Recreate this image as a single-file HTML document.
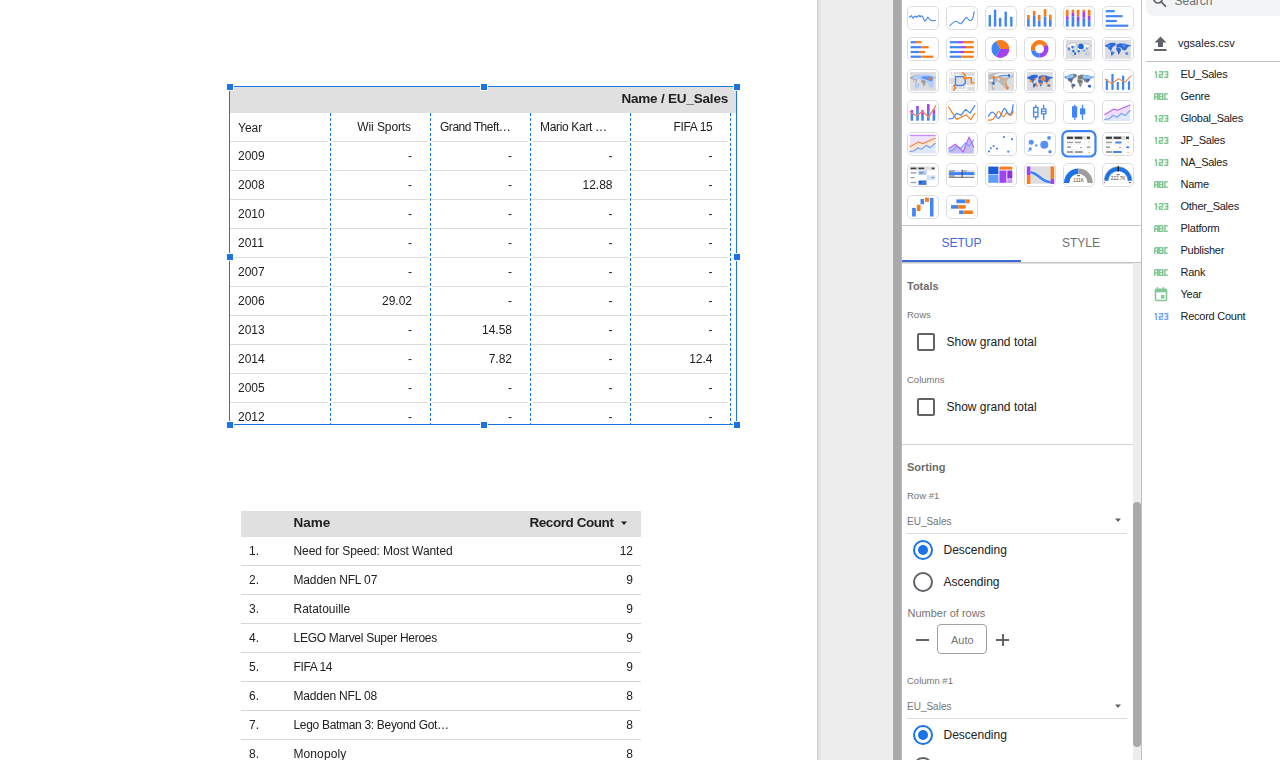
<!DOCTYPE html><html><head><meta charset="utf-8"><style>
*{box-sizing:border-box;margin:0;padding:0}
html,body{width:1280px;height:760px;overflow:hidden;background:#fff;font-family:"Liberation Sans",sans-serif;color:#212121}
.a{position:absolute}
.t{position:absolute;white-space:nowrap;font-size:12px;line-height:14px}
.r{text-align:right}
.b{font-weight:bold}
.hl{position:absolute;height:1px}
.dv{position:absolute;width:1px;background:repeating-linear-gradient(to bottom,#1a73e8 0 3px,transparent 3px 5px)}
.hd{position:absolute;width:8px;height:8px;background:#1a73e8;border:1px solid #fff}
.ib{position:absolute;width:33px;height:25px;border:1px solid #dadce0;border-radius:5px;background:#fff;overflow:hidden}
.ib svg{position:absolute;left:0;top:0}
</style></head><body>
<div class="a" style="left:817px;top:0;width:76px;height:760px;background:#ededed"></div>
<div class="a" style="left:817px;top:0;width:5px;height:760px;background:linear-gradient(to right,#cfcfcf,#e2e2e2 45%,#ededed)"></div>
<div class="a" style="left:893px;top:0;width:9px;height:760px;background:#aaaaaa"></div>
<div class="a" style="left:901px;top:0;width:1px;height:760px;background:#b6b7ba"></div>
<div class="a" style="left:0;top:0;width:817px;height:760px;will-change:transform">
<div class="a" style="left:230px;top:87px;width:506px;height:26px;background:#e0e0e0"></div>
<div class="t b" style="left:540px;top:92.30px;width:188px;text-align:right;font-size:13.5px;letter-spacing:-0.2px">Name / EU_Sales</div>
<div class="t" style="left:238px;top:121px">Year</div>
<div class="t r" style="left:331px;top:120px;width:80px;letter-spacing:-0.1px">Wii Sports</div>
<div class="t" style="left:440px;top:120px;letter-spacing:-0.46px">Grand Theft…</div>
<div class="t" style="left:540px;top:120px;letter-spacing:-0.33px">Mario Kart …</div>
<div class="t r" style="left:631px;top:120px;width:81.3px;letter-spacing:-0.36px">FIFA 15</div>
<div class="hl" style="left:230px;top:141px;width:98px;background:#dcdcdc"></div>
<div class="hl" style="left:332px;top:141px;width:96px;background:#dcdcdc"></div>
<div class="hl" style="left:432px;top:141px;width:96px;background:#dcdcdc"></div>
<div class="hl" style="left:532px;top:141px;width:96px;background:#dcdcdc"></div>
<div class="hl" style="left:632px;top:141px;width:96px;background:#dcdcdc"></div>
<div class="hl" style="left:230px;top:170px;width:98px;background:#dcdcdc"></div>
<div class="hl" style="left:332px;top:170px;width:96px;background:#dcdcdc"></div>
<div class="hl" style="left:432px;top:170px;width:96px;background:#dcdcdc"></div>
<div class="hl" style="left:532px;top:170px;width:96px;background:#dcdcdc"></div>
<div class="hl" style="left:632px;top:170px;width:96px;background:#dcdcdc"></div>
<div class="hl" style="left:230px;top:199px;width:98px;background:#dcdcdc"></div>
<div class="hl" style="left:332px;top:199px;width:96px;background:#dcdcdc"></div>
<div class="hl" style="left:432px;top:199px;width:96px;background:#dcdcdc"></div>
<div class="hl" style="left:532px;top:199px;width:96px;background:#dcdcdc"></div>
<div class="hl" style="left:632px;top:199px;width:96px;background:#dcdcdc"></div>
<div class="hl" style="left:230px;top:228px;width:98px;background:#dcdcdc"></div>
<div class="hl" style="left:332px;top:228px;width:96px;background:#dcdcdc"></div>
<div class="hl" style="left:432px;top:228px;width:96px;background:#dcdcdc"></div>
<div class="hl" style="left:532px;top:228px;width:96px;background:#dcdcdc"></div>
<div class="hl" style="left:632px;top:228px;width:96px;background:#dcdcdc"></div>
<div class="hl" style="left:230px;top:257px;width:98px;background:#dcdcdc"></div>
<div class="hl" style="left:332px;top:257px;width:96px;background:#dcdcdc"></div>
<div class="hl" style="left:432px;top:257px;width:96px;background:#dcdcdc"></div>
<div class="hl" style="left:532px;top:257px;width:96px;background:#dcdcdc"></div>
<div class="hl" style="left:632px;top:257px;width:96px;background:#dcdcdc"></div>
<div class="hl" style="left:230px;top:286px;width:98px;background:#dcdcdc"></div>
<div class="hl" style="left:332px;top:286px;width:96px;background:#dcdcdc"></div>
<div class="hl" style="left:432px;top:286px;width:96px;background:#dcdcdc"></div>
<div class="hl" style="left:532px;top:286px;width:96px;background:#dcdcdc"></div>
<div class="hl" style="left:632px;top:286px;width:96px;background:#dcdcdc"></div>
<div class="hl" style="left:230px;top:315px;width:98px;background:#dcdcdc"></div>
<div class="hl" style="left:332px;top:315px;width:96px;background:#dcdcdc"></div>
<div class="hl" style="left:432px;top:315px;width:96px;background:#dcdcdc"></div>
<div class="hl" style="left:532px;top:315px;width:96px;background:#dcdcdc"></div>
<div class="hl" style="left:632px;top:315px;width:96px;background:#dcdcdc"></div>
<div class="hl" style="left:230px;top:344px;width:98px;background:#dcdcdc"></div>
<div class="hl" style="left:332px;top:344px;width:96px;background:#dcdcdc"></div>
<div class="hl" style="left:432px;top:344px;width:96px;background:#dcdcdc"></div>
<div class="hl" style="left:532px;top:344px;width:96px;background:#dcdcdc"></div>
<div class="hl" style="left:632px;top:344px;width:96px;background:#dcdcdc"></div>
<div class="hl" style="left:230px;top:373px;width:98px;background:#dcdcdc"></div>
<div class="hl" style="left:332px;top:373px;width:96px;background:#dcdcdc"></div>
<div class="hl" style="left:432px;top:373px;width:96px;background:#dcdcdc"></div>
<div class="hl" style="left:532px;top:373px;width:96px;background:#dcdcdc"></div>
<div class="hl" style="left:632px;top:373px;width:96px;background:#dcdcdc"></div>
<div class="hl" style="left:230px;top:402px;width:98px;background:#dcdcdc"></div>
<div class="hl" style="left:332px;top:402px;width:96px;background:#dcdcdc"></div>
<div class="hl" style="left:432px;top:402px;width:96px;background:#dcdcdc"></div>
<div class="hl" style="left:532px;top:402px;width:96px;background:#dcdcdc"></div>
<div class="hl" style="left:632px;top:402px;width:96px;background:#dcdcdc"></div>
<div class="a" style="left:230px;top:87px;width:507px;height:337px;overflow:hidden">
<div class="t" style="left:8px;top:62px">2009</div>
<div class="t r" style="left:92px;top:62px;width:90px">-</div>
<div class="t r" style="left:192px;top:62px;width:90px">-</div>
<div class="t r" style="left:292.5px;top:62px;width:90px">-</div>
<div class="t r" style="left:392.5px;top:62px;width:90px">-</div>
<div class="t" style="left:8px;top:91px">2008</div>
<div class="t r" style="left:92px;top:91px;width:90px">-</div>
<div class="t r" style="left:192px;top:91px;width:90px">-</div>
<div class="t r" style="left:292.5px;top:91px;width:90px">12.88</div>
<div class="t r" style="left:392.5px;top:91px;width:90px">-</div>
<div class="t" style="left:8px;top:120px">2010</div>
<div class="t r" style="left:92px;top:120px;width:90px">-</div>
<div class="t r" style="left:192px;top:120px;width:90px">-</div>
<div class="t r" style="left:292.5px;top:120px;width:90px">-</div>
<div class="t r" style="left:392.5px;top:120px;width:90px">-</div>
<div class="t" style="left:8px;top:149px">2011</div>
<div class="t r" style="left:92px;top:149px;width:90px">-</div>
<div class="t r" style="left:192px;top:149px;width:90px">-</div>
<div class="t r" style="left:292.5px;top:149px;width:90px">-</div>
<div class="t r" style="left:392.5px;top:149px;width:90px">-</div>
<div class="t" style="left:8px;top:178px">2007</div>
<div class="t r" style="left:92px;top:178px;width:90px">-</div>
<div class="t r" style="left:192px;top:178px;width:90px">-</div>
<div class="t r" style="left:292.5px;top:178px;width:90px">-</div>
<div class="t r" style="left:392.5px;top:178px;width:90px">-</div>
<div class="t" style="left:8px;top:207px">2006</div>
<div class="t r" style="left:92px;top:207px;width:90px">29.02</div>
<div class="t r" style="left:192px;top:207px;width:90px">-</div>
<div class="t r" style="left:292.5px;top:207px;width:90px">-</div>
<div class="t r" style="left:392.5px;top:207px;width:90px">-</div>
<div class="t" style="left:8px;top:236px">2013</div>
<div class="t r" style="left:92px;top:236px;width:90px">-</div>
<div class="t r" style="left:192px;top:236px;width:90px">14.58</div>
<div class="t r" style="left:292.5px;top:236px;width:90px">-</div>
<div class="t r" style="left:392.5px;top:236px;width:90px">-</div>
<div class="t" style="left:8px;top:265px">2014</div>
<div class="t r" style="left:92px;top:265px;width:90px">-</div>
<div class="t r" style="left:192px;top:265px;width:90px">7.82</div>
<div class="t r" style="left:292.5px;top:265px;width:90px">-</div>
<div class="t r" style="left:392.5px;top:265px;width:90px">12.4</div>
<div class="t" style="left:8px;top:294px">2005</div>
<div class="t r" style="left:92px;top:294px;width:90px">-</div>
<div class="t r" style="left:192px;top:294px;width:90px">-</div>
<div class="t r" style="left:292.5px;top:294px;width:90px">-</div>
<div class="t r" style="left:392.5px;top:294px;width:90px">-</div>
<div class="t" style="left:8px;top:323px">2012</div>
<div class="t r" style="left:92px;top:323px;width:90px">-</div>
<div class="t r" style="left:192px;top:323px;width:90px">-</div>
<div class="t r" style="left:292.5px;top:323px;width:90px">-</div>
<div class="t r" style="left:392.5px;top:323px;width:90px">-</div>
</div>
<div class="dv" style="left:330px;top:113px;height:311px"></div>
<div class="dv" style="left:430px;top:113px;height:311px"></div>
<div class="dv" style="left:530px;top:113px;height:311px"></div>
<div class="dv" style="left:630px;top:113px;height:311px"></div>
<div class="dv" style="left:730px;top:113px;height:311px"></div>
<div class="a" style="left:229px;top:86px;width:508px;height:339px;border:1px solid #1a73e8"></div>
<div class="hd" style="left:226px;top:83px"></div>
<div class="hd" style="left:226px;top:253px"></div>
<div class="hd" style="left:226px;top:421px"></div>
<div class="hd" style="left:480px;top:83px"></div>
<div class="hd" style="left:480px;top:421px"></div>
<div class="hd" style="left:733px;top:83px"></div>
<div class="hd" style="left:733px;top:253px"></div>
<div class="hd" style="left:733px;top:421px"></div>
<div class="a" style="left:241px;top:511px;width:400px;height:26px;background:#e0e0e0"></div>
<div class="t b" style="left:293.5px;top:516.30px;font-size:13.5px">Name</div>
<div class="t b r" style="left:480px;top:516.30px;width:133.5px;font-size:13.5px;letter-spacing:-0.43px">Record Count</div>
<svg class="a" style="left:620px;top:520px" width="8" height="6"><path d="M1 1.5h6l-3 3.5z" fill="#212121"/></svg>
<div class="t" style="left:249px;top:544px">1.</div>
<div class="t" style="left:293.5px;top:544px;letter-spacing:-0.07px">Need for Speed: Most Wanted</div>
<div class="t r" style="left:580px;top:544px;width:53px">12</div>
<div class="hl" style="left:241px;top:565px;width:400px;background:#d6d6d6"></div>
<div class="t" style="left:249px;top:573px">2.</div>
<div class="t" style="left:293.5px;top:573px;letter-spacing:-0.15px">Madden NFL 07</div>
<div class="t r" style="left:580px;top:573px;width:53px">9</div>
<div class="hl" style="left:241px;top:594px;width:400px;background:#d6d6d6"></div>
<div class="t" style="left:249px;top:602px">3.</div>
<div class="t" style="left:293.5px;top:602px;letter-spacing:0px">Ratatouille</div>
<div class="t r" style="left:580px;top:602px;width:53px">9</div>
<div class="hl" style="left:241px;top:623px;width:400px;background:#d6d6d6"></div>
<div class="t" style="left:249px;top:631px">4.</div>
<div class="t" style="left:293.5px;top:631px;letter-spacing:-0.275px">LEGO Marvel Super Heroes</div>
<div class="t r" style="left:580px;top:631px;width:53px">9</div>
<div class="hl" style="left:241px;top:652px;width:400px;background:#d6d6d6"></div>
<div class="t" style="left:249px;top:660px">5.</div>
<div class="t" style="left:293.5px;top:660px;letter-spacing:-0.39px">FIFA 14</div>
<div class="t r" style="left:580px;top:660px;width:53px">9</div>
<div class="hl" style="left:241px;top:681px;width:400px;background:#d6d6d6"></div>
<div class="t" style="left:249px;top:689px">6.</div>
<div class="t" style="left:293.5px;top:689px;letter-spacing:-0.16px">Madden NFL 08</div>
<div class="t r" style="left:580px;top:689px;width:53px">8</div>
<div class="hl" style="left:241px;top:710px;width:400px;background:#d6d6d6"></div>
<div class="t" style="left:249px;top:718px">7.</div>
<div class="t" style="left:293.5px;top:718px;letter-spacing:-0.315px">Lego Batman 3: Beyond Got…</div>
<div class="t r" style="left:580px;top:718px;width:53px">8</div>
<div class="hl" style="left:241px;top:739px;width:400px;background:#d6d6d6"></div>
<div class="t" style="left:249px;top:747px">8.</div>
<div class="t" style="left:293.5px;top:747px;letter-spacing:0.09px">Monopoly</div>
<div class="t r" style="left:580px;top:747px;width:53px">8</div>
</div>
<div class="a" style="left:902px;top:0;width:239px;height:760px;background:#fff"></div>
<svg class="a" style="left:907px;top:6px" width="32" height="24" viewBox="0 0 32 24"><rect x="0.5" y="0.5" width="31" height="23" rx="4.5" fill="#fff" stroke="#dadce0"/><path d="M2.3,11.2 L3.3,10.5 L4.5,9.7 L6.1,12.2 L8,10 L9.6,11.2 L12,9.4 L13.2,11 L14.2,9.7 L15.7,11 L17.6,15 L19.2,13.7 L20.7,11.2 L23.2,14 L24.5,14.4 L26.4,14.7 L28.6,14.2" fill="none" stroke="#4285f4" stroke-width="1.1" stroke-linejoin="round" stroke-linecap="round"/></svg>
<svg class="a" style="left:946px;top:6px" width="32" height="24" viewBox="0 0 32 24"><rect x="0.5" y="0.5" width="31" height="23" rx="4.5" fill="#fff" stroke="#dadce0"/><path d="M3.7,19.7 C6,17.5 8,15.3 10,15.3 C12,15.3 13,17.8 14.4,17.8 C16,17.8 17.5,14.5 19.7,12 C21.5,10.5 22.5,14.7 24,14.7 C26,14.7 27.5,11 28.1,5.9" fill="none" stroke="#4285f4" stroke-width="1.1" stroke-linecap="round"/></svg>
<svg class="a" style="left:985px;top:6px" width="32" height="24" viewBox="0 0 32 24"><rect x="0.5" y="0.5" width="31" height="23" rx="4.5" fill="#fff" stroke="#dadce0"/><rect x="3.6" y="9" width="2.4" height="11.600000000000001" fill="#4285f4"/><rect x="8.9" y="3.75" width="2.4" height="16.85" fill="#4285f4"/><rect x="13.9" y="11.9" width="2.4" height="8.700000000000001" fill="#4285f4"/><rect x="19.5" y="5.6" width="2.4" height="15.000000000000002" fill="#4285f4"/><rect x="25.1" y="10.8" width="2.4" height="9.8" fill="#4285f4"/></svg>
<svg class="a" style="left:1024px;top:6px" width="32" height="24" viewBox="0 0 32 24"><rect x="0.5" y="0.5" width="31" height="23" rx="4.5" fill="#fff" stroke="#dadce0"/><rect x="3.1" y="9" width="2.6" height="4.1" fill="#fa7b17"/><rect x="3.1" y="13.1" width="2.6" height="7.500000000000002" fill="#4285f4"/><rect x="8.9" y="5" width="2.6" height="4.4" fill="#fa7b17"/><rect x="8.9" y="9.4" width="2.6" height="11.200000000000001" fill="#4285f4"/><rect x="13.9" y="9" width="2.6" height="5.6" fill="#fa7b17"/><rect x="13.9" y="14.6" width="2.6" height="6.000000000000002" fill="#4285f4"/><rect x="19.75" y="3.1" width="2.6" height="7.5" fill="#fa7b17"/><rect x="19.75" y="10.6" width="2.6" height="10.000000000000002" fill="#4285f4"/><rect x="25" y="8.75" width="2.6" height="5.15" fill="#fa7b17"/><rect x="25" y="13.9" width="2.6" height="6.700000000000001" fill="#4285f4"/></svg>
<svg class="a" style="left:1063px;top:6px" width="32" height="24" viewBox="0 0 32 24"><rect x="0.5" y="0.5" width="31" height="23" rx="4.5" fill="#fff" stroke="#dadce0"/><rect x="2.9" y="3.75" width="2.7" height="6.550000000000001" fill="#fa7b17"/><rect x="2.9" y="10.3" width="2.7" height="3.4499999999999993" fill="#a142f4"/><rect x="2.9" y="13.75" width="2.7" height="6.850000000000001" fill="#4285f4"/><rect x="8.6" y="3.75" width="2.7" height="2.8499999999999996" fill="#fa7b17"/><rect x="8.6" y="6.6" width="2.7" height="3.700000000000001" fill="#a142f4"/><rect x="8.6" y="10.3" width="2.7" height="10.3" fill="#4285f4"/><rect x="13.75" y="3.75" width="2.7" height="6.85" fill="#fa7b17"/><rect x="13.75" y="10.6" width="2.7" height="4.4" fill="#a142f4"/><rect x="13.75" y="15" width="2.7" height="5.600000000000001" fill="#4285f4"/><rect x="19.5" y="3.75" width="2.7" height="1.8499999999999996" fill="#fa7b17"/><rect x="19.5" y="5.6" width="2.7" height="6.0" fill="#a142f4"/><rect x="19.5" y="11.6" width="2.7" height="9.000000000000002" fill="#4285f4"/><rect x="24.8" y="3.75" width="2.7" height="5.949999999999999" fill="#fa7b17"/><rect x="24.8" y="9.7" width="2.7" height="5.0" fill="#a142f4"/><rect x="24.8" y="14.7" width="2.7" height="5.900000000000002" fill="#4285f4"/></svg>
<svg class="a" style="left:1102px;top:6px" width="32" height="24" viewBox="0 0 32 24"><rect x="0.5" y="0.5" width="31" height="23" rx="4.5" fill="#fff" stroke="#dadce0"/><rect x="3.75" y="4.1" width="9" height="2.2" fill="#4285f4"/><rect x="3.75" y="9.1" width="16.8" height="2.2" fill="#4285f4"/><rect x="3.75" y="13.9" width="11" height="2.2" fill="#4285f4"/><rect x="3.75" y="18.599999999999998" width="22.5" height="2.2" fill="#4285f4"/></svg>
<svg class="a" style="left:907px;top:37px" width="32" height="24" viewBox="0 0 32 24"><rect x="0.5" y="0.5" width="31" height="23" rx="4.5" fill="#fff" stroke="#dadce0"/><rect x="3.6" y="4.1" width="5.300000000000001" height="2.2" fill="#4285f4"/><rect x="8.9" y="4.1" width="5.6" height="2.2" fill="#fa7b17"/><rect x="3.6" y="9.1" width="10.9" height="2.2" fill="#4285f4"/><rect x="14.5" y="9.1" width="7.199999999999999" height="2.2" fill="#fa7b17"/><rect x="3.6" y="13.9" width="8.4" height="2.2" fill="#4285f4"/><rect x="12" y="13.9" width="5.899999999999999" height="2.2" fill="#fa7b17"/><rect x="3.6" y="18.599999999999998" width="10.9" height="2.2" fill="#4285f4"/><rect x="14.5" y="18.599999999999998" width="11.899999999999999" height="2.2" fill="#fa7b17"/></svg>
<svg class="a" style="left:946px;top:37px" width="32" height="24" viewBox="0 0 32 24"><rect x="0.5" y="0.5" width="31" height="23" rx="4.5" fill="#fff" stroke="#dadce0"/><rect x="3.75" y="4.1" width="8.15" height="2.2" fill="#4285f4"/><rect x="11.9" y="4.1" width="5.9" height="2.2" fill="#a142f4"/><rect x="17.8" y="4.1" width="10.0" height="2.2" fill="#fa7b17"/><rect x="3.75" y="9.1" width="11.25" height="2.2" fill="#4285f4"/><rect x="15" y="9.1" width="5" height="2.2" fill="#a142f4"/><rect x="20" y="9.1" width="7.800000000000001" height="2.2" fill="#fa7b17"/><rect x="3.75" y="13.9" width="9.05" height="2.2" fill="#4285f4"/><rect x="12.8" y="13.9" width="5.300000000000001" height="2.2" fill="#a142f4"/><rect x="18.1" y="13.9" width="9.7" height="2.2" fill="#fa7b17"/><rect x="3.75" y="18.599999999999998" width="11.85" height="2.2" fill="#4285f4"/><rect x="15.6" y="18.599999999999998" width="0.0" height="2.2" fill="#a142f4"/><rect x="15.6" y="18.599999999999998" width="12.200000000000001" height="2.2" fill="#fa7b17"/></svg>
<svg class="a" style="left:985px;top:37px" width="32" height="24" viewBox="0 0 32 24"><rect x="0.5" y="0.5" width="31" height="23" rx="4.5" fill="#fff" stroke="#dadce0"/><path d="M15.4,11.9 L10.95,4.19 A8.9,8.9 0 0 1 24.30,11.90 Z" fill="#fa7b17"/><path d="M15.4,11.9 L24.30,11.90 A8.9,8.9 0 0 1 10.95,19.61 Z" fill="#a142f4"/><path d="M15.4,11.9 L10.95,19.61 A8.9,8.9 0 0 1 10.95,4.19 Z" fill="#4285f4"/></svg>
<svg class="a" style="left:1024px;top:37px" width="32" height="24" viewBox="0 0 32 24"><rect x="0.5" y="0.5" width="31" height="23" rx="4.5" fill="#fff" stroke="#dadce0"/><path d="M9.22,13.61 A6.6,6.6 0 0 1 21.32,8.60" fill="none" stroke="#fa7b17" stroke-width="4.3"/><path d="M21.32,8.60 A6.6,6.6 0 0 1 15.60,18.50" fill="none" stroke="#a142f4" stroke-width="4.3"/><path d="M15.60,18.50 A6.6,6.6 0 0 1 9.22,13.61" fill="none" stroke="#4285f4" stroke-width="4.3"/></svg>
<svg class="a" style="left:1063px;top:37px" width="32" height="24" viewBox="0 0 32 24"><rect x="0.5" y="0.5" width="31" height="23" rx="4.5" fill="#fff" stroke="#dadce0"/><rect x="3" y="3" width="25.9" height="18.8" fill="#dcdde0"/><g stroke="#a8a8a8" stroke-width="0.6"><g><path d="M3,8.4 L5,7.6 L8,6 L10.5,5.7 L12.5,5.8 L13.9,6.5 L13.5,8.2 L11.8,9.3 L10.7,10 L10.2,11.2 L9.5,12.6 L9.2,14.3 L8.5,13.8 L7.5,12.6 L6.2,11.8 L5.7,10.2 L4.2,9.8 L3.2,9.5 Z" fill="#f8f8f8"/><path d="M9,14.5 L11,14.6 L12.6,15.6 L12,16.8 L10.8,17.6 L9.8,19.3 L9.3,18 L8.9,16 Z" fill="#f8f8f8"/><path d="M14.5,7.5 L16,7 L17.7,6.3 L20,6.5 L22.5,6.8 L25,7.4 L28.7,8.3 L28.5,9.3 L26.5,9.6 L25.5,10.5 L24.5,12 L23.5,13.2 L22.5,13.8 L21.5,12.5 L20.5,13.2 L20,11.5 L18.5,10.5 L16.5,10.3 L14.5,10.2 Z" fill="#f8f8f8"/><path d="M14.2,10.5 L16.5,10.5 L18.2,11 L19,12.5 L18.5,14.5 L17.5,16.5 L16.5,17.7 L15.8,15.5 L15.2,13.8 L14.2,13.2 Z" fill="#f8f8f8"/><path d="M23.4,15.8 L25,15.2 L26.2,15.8 L26.2,17.6 L24.2,17.8 L23.3,17 Z" fill="#f8f8f8"/></g></g><g><path d="M3,8.4 L5,7.6 L8,6 L10.5,5.7 L12.5,5.8 L13.9,6.5 L13.5,8.2 L11.8,9.3 L10.7,10 L10.2,11.2 L9.5,12.6 L9.2,14.3 L8.5,13.8 L7.5,12.6 L6.2,11.8 L5.7,10.2 L4.2,9.8 L3.2,9.5 Z" fill="none"/><path d="M9,14.5 L11,14.6 L12.6,15.6 L12,16.8 L10.8,17.6 L9.8,19.3 L9.3,18 L8.9,16 Z" fill="none"/><path d="M14.5,7.5 L16,7 L17.7,6.3 L20,6.5 L22.5,6.8 L25,7.4 L28.7,8.3 L28.5,9.3 L26.5,9.6 L25.5,10.5 L24.5,12 L23.5,13.2 L22.5,13.8 L21.5,12.5 L20.5,13.2 L20,11.5 L18.5,10.5 L16.5,10.3 L14.5,10.2 Z" fill="none"/><path d="M14.2,10.5 L16.5,10.5 L18.2,11 L19,12.5 L18.5,14.5 L17.5,16.5 L16.5,17.7 L15.8,15.5 L15.2,13.8 L14.2,13.2 Z" fill="none"/><path d="M23.4,15.8 L25,15.2 L26.2,15.8 L26.2,17.6 L24.2,17.8 L23.3,17 Z" fill="none"/><circle cx="18" cy="9.5" r="2.8" fill="#1a66d9"/><circle cx="6" cy="12" r="1.4" fill="#4a8af4"/><circle cx="9.5" cy="10.1" r="1.3" fill="#3b7ae8"/><circle cx="10.4" cy="14.2" r="1.2" fill="#2a6de0"/><circle cx="12" cy="16.7" r="1.2" fill="#1a66d9"/><circle cx="15.8" cy="14.2" r="1.3" fill="#3b7ae8"/><circle cx="23.7" cy="11.4" r="1.2" fill="#6aa0f6"/><circle cx="21.2" cy="13.6" r="1.1" fill="#6aa0f6"/><circle cx="23.4" cy="17" r="0.8" fill="#6aa0f6"/></g></svg>
<svg class="a" style="left:1102px;top:37px" width="32" height="24" viewBox="0 0 32 24"><rect x="0.5" y="0.5" width="31" height="23" rx="4.5" fill="#fff" stroke="#dadce0"/><rect x="3" y="3" width="25.9" height="18.8" fill="#dcdde0"/><g><path d="M3,8.4 L5,7.6 L8,6 L10.5,5.7 L12.5,5.8 L13.9,6.5 L13.5,8.2 L11.8,9.3 L10.7,10 L10.2,11.2 L9.5,12.6 L9.2,14.3 L8.5,13.8 L7.5,12.6 L6.2,11.8 L5.7,10.2 L4.2,9.8 L3.2,9.5 Z" fill="#2f68d8"/><path d="M9,14.5 L11,14.6 L12.6,15.6 L12,16.8 L10.8,17.6 L9.8,19.3 L9.3,18 L8.9,16 Z" fill="#2f68d8"/><path d="M14.5,7.5 L16,7 L17.7,6.3 L20,6.5 L22.5,6.8 L25,7.4 L28.7,8.3 L28.5,9.3 L26.5,9.6 L25.5,10.5 L24.5,12 L23.5,13.2 L22.5,13.8 L21.5,12.5 L20.5,13.2 L20,11.5 L18.5,10.5 L16.5,10.3 L14.5,10.2 Z" fill="#2f68d8"/><path d="M14.2,10.5 L16.5,10.5 L18.2,11 L19,12.5 L18.5,14.5 L17.5,16.5 L16.5,17.7 L15.8,15.5 L15.2,13.8 L14.2,13.2 Z" fill="#2f68d8"/><path d="M23.4,15.8 L25,15.2 L26.2,15.8 L26.2,17.6 L24.2,17.8 L23.3,17 Z" fill="#2f68d8"/><circle cx="7" cy="9" r="1.5" fill="#4a8af4"/><circle cx="22" cy="8.5" r="2" fill="#4a8af4"/><circle cx="11" cy="15.5" r="1" fill="#5b95f5"/><circle cx="25" cy="16.5" r="1" fill="#5b95f5"/></g></svg>
<svg class="a" style="left:907px;top:69px" width="32" height="24" viewBox="0 0 32 24"><rect x="0.5" y="0.5" width="31" height="23" rx="4.5" fill="#fff" stroke="#dadce0"/><rect x="3" y="3" width="25.9" height="18.8" fill="#dcdde0"/><g><path d="M3,8.4 L5,7.6 L8,6 L10.5,5.7 L12.5,5.8 L13.9,6.5 L13.5,8.2 L11.8,9.3 L10.7,10 L10.2,11.2 L9.5,12.6 L9.2,14.3 L8.5,13.8 L7.5,12.6 L6.2,11.8 L5.7,10.2 L4.2,9.8 L3.2,9.5 Z" fill="#a3a3a3"/><path d="M9,14.5 L11,14.6 L12.6,15.6 L12,16.8 L10.8,17.6 L9.8,19.3 L9.3,18 L8.9,16 Z" fill="#a3a3a3"/><path d="M14.5,7.5 L16,7 L17.7,6.3 L20,6.5 L22.5,6.8 L25,7.4 L28.7,8.3 L28.5,9.3 L26.5,9.6 L25.5,10.5 L24.5,12 L23.5,13.2 L22.5,13.8 L21.5,12.5 L20.5,13.2 L20,11.5 L18.5,10.5 L16.5,10.3 L14.5,10.2 Z" fill="#a3a3a3"/><path d="M14.2,10.5 L16.5,10.5 L18.2,11 L19,12.5 L18.5,14.5 L17.5,16.5 L16.5,17.7 L15.8,15.5 L15.2,13.8 L14.2,13.2 Z" fill="#a3a3a3"/><path d="M23.4,15.8 L25,15.2 L26.2,15.8 L26.2,17.6 L24.2,17.8 L23.3,17 Z" fill="#a3a3a3"/><path d="M5.7,7.9 C8,5.5 12,5 16,5.2 C20,5.2 25,5.5 26.5,7.5 C27.5,10 27,14 26,17.7 C25.5,19.5 24,20 23,19 C21.5,16 20,13 18.5,11.5 C16,10.5 12,10.6 9.5,10.5 C7,10.4 5,9.8 5.7,7.9 Z" fill="#b3cdf8" opacity="0.95"/><path d="M14.2,7.9 C16,7 20,7 24.6,7.6 C26.5,8.5 26.5,11.5 24.3,12.6 C22,12 20,10.6 18,10.2 C16,9.8 14,9.5 14.2,7.9 Z" fill="#5b95f5"/><circle cx="22.7" cy="9.8" r="1.3" fill="#fa7b17"/><ellipse cx="9.8" cy="16.7" rx="2.1" ry="3" fill="#b3cdf8"/><path d="M6,11 L9,11.5 L8.5,12.8 Z" fill="#f4f4f4"/></g></svg>
<svg class="a" style="left:946px;top:69px" width="32" height="24" viewBox="0 0 32 24"><rect x="0.5" y="0.5" width="31" height="23" rx="4.5" fill="#fff" stroke="#dadce0"/><rect x="3" y="3" width="25.9" height="18.8" fill="#dcdde0"/><path d="M4.3,3 V7.5 M7,3 V6.5 M3,8.2 H9 M9.6,5.8 H13 M3,15.8 H8 M4.3,16 V21.8 M20.5,17.2 H28.9 M20.5,15.5 V21.8 M9.5,20.6 H20.5 M21,7.6 H28.9" stroke="#fff" stroke-width="1.3"/><path d="M9.5,7.6 H17 L19.3,10.4 V13.9 L17,16.4 H9.5 Z" fill="none" stroke="#4285f4" stroke-width="1.4"/><path d="M16.4,3.5 L19.3,6 L17.7,8.5 L19.6,10.4 L20.5,8.8 H25.3 V13.9 H28.7 M9.5,16.4 L7.6,16.4 L9.5,19 L7.3,21.5" fill="none" stroke="#fa7b17" stroke-width="1.4" stroke-linejoin="round"/></svg>
<svg class="a" style="left:985px;top:69px" width="32" height="24" viewBox="0 0 32 24"><rect x="0.5" y="0.5" width="31" height="23" rx="4.5" fill="#fff" stroke="#dadce0"/><rect x="3" y="3" width="25.9" height="18.8" fill="#dcdde0"/><path d="M3.2,6 L8,4.5 L14,3.5 L20,3.8 L28.5,5 L28,8 L23,10 L21,14 L24,19 L22,21 L16,15 L12,12 L9,14 L9.5,21 L7,20.5 L6.5,15 L3.5,14 L4,10 Z" fill="#b9b9b9"/><path d="M8,6.5 L14,4.2 L22,4.2 L28,5.2 L25,8 L18,8.5 L12,7.5 Z M4,11 L7,10 L9,11.5 L5,13 Z M12,9 L15,10 L14,12 Z M18,10 L21,12 L20,14 Z M8,15 L9,17 L8,19 Z" fill="#f4f4f4"/><path d="M13.3,7.4 C17,6.3 21,6.4 24,6.6" fill="none" stroke="#5b95f5" stroke-width="1.3"/><circle cx="24" cy="6.6" r="1.3" fill="#1a66d9"/><path d="M8.8,8.8 C9.8,10 8,12.5 8.5,14.5" fill="none" stroke="#5b95f5" stroke-width="1.3"/><circle cx="8.5" cy="14.5" r="1.2" fill="#1a66d9"/><path d="M8.8,8.5 C14,6.5 21,9 22.4,19" fill="none" stroke="#f29a55" stroke-width="1.1"/><circle cx="8.8" cy="8.5" r="1.3" fill="#fa7b17"/><circle cx="22.4" cy="19" r="1.3" fill="#fa7b17"/></svg>
<svg class="a" style="left:1024px;top:69px" width="32" height="24" viewBox="0 0 32 24"><rect x="0.5" y="0.5" width="31" height="23" rx="4.5" fill="#fff" stroke="#dadce0"/><rect x="3" y="3" width="25.9" height="18.8" fill="#dcdde0"/><g><path d="M3,8.4 L5,7.6 L8,6 L10.5,5.7 L12.5,5.8 L13.9,6.5 L13.5,8.2 L11.8,9.3 L10.7,10 L10.2,11.2 L9.5,12.6 L9.2,14.3 L8.5,13.8 L7.5,12.6 L6.2,11.8 L5.7,10.2 L4.2,9.8 L3.2,9.5 Z" fill="#2f68d8"/><path d="M9,14.5 L11,14.6 L12.6,15.6 L12,16.8 L10.8,17.6 L9.8,19.3 L9.3,18 L8.9,16 Z" fill="#2f68d8"/><path d="M14.5,7.5 L16,7 L17.7,6.3 L20,6.5 L22.5,6.8 L25,7.4 L28.7,8.3 L28.5,9.3 L26.5,9.6 L25.5,10.5 L24.5,12 L23.5,13.2 L22.5,13.8 L21.5,12.5 L20.5,13.2 L20,11.5 L18.5,10.5 L16.5,10.3 L14.5,10.2 Z" fill="#2f68d8"/><path d="M14.2,10.5 L16.5,10.5 L18.2,11 L19,12.5 L18.5,14.5 L17.5,16.5 L16.5,17.7 L15.8,15.5 L15.2,13.8 L14.2,13.2 Z" fill="#2f68d8"/><path d="M23.4,15.8 L25,15.2 L26.2,15.8 L26.2,17.6 L24.2,17.8 L23.3,17 Z" fill="#2f68d8"/><circle cx="19.2" cy="9.6" r="2.6" fill="#e8843a"/><circle cx="7" cy="12" r="1.3" fill="#e8843a"/><circle cx="11" cy="10.3" r="1.1" fill="#e8843a"/><circle cx="12" cy="14.6" r="1" fill="#e8843a"/><circle cx="13" cy="16.7" r="1" fill="#e8843a"/><circle cx="17.3" cy="14.8" r="1.2" fill="#e8843a"/><circle cx="25" cy="11.5" r="1" fill="#e8843a"/><circle cx="22.5" cy="14" r="0.9" fill="#e8843a"/><circle cx="24.3" cy="17.2" r="0.8" fill="#e8843a"/></g></svg>
<svg class="a" style="left:1063px;top:69px" width="32" height="24" viewBox="0 0 32 24"><rect x="0.5" y="0.5" width="31" height="23" rx="4.5" fill="#fff" stroke="#dadce0"/><g transform="translate(1.6,4.7) scale(1.14,1.13) translate(-3,-5.6)"><g><path d="M3,8.4 L5,7.6 L8,6 L10.5,5.7 L12.5,5.8 L13.9,6.5 L13.5,8.2 L11.8,9.3 L10.7,10 L10.2,11.2 L9.5,12.6 L9.2,14.3 L8.5,13.8 L7.5,12.6 L6.2,11.8 L5.7,10.2 L4.2,9.8 L3.2,9.5 Z" fill="#7d7d7d"/><path d="M9,14.5 L11,14.6 L12.6,15.6 L12,16.8 L10.8,17.6 L9.8,19.3 L9.3,18 L8.9,16 Z" fill="#7d7d7d"/><path d="M14.5,7.5 L16,7 L17.7,6.3 L20,6.5 L22.5,6.8 L25,7.4 L28.7,8.3 L28.5,9.3 L26.5,9.6 L25.5,10.5 L24.5,12 L23.5,13.2 L22.5,13.8 L21.5,12.5 L20.5,13.2 L20,11.5 L18.5,10.5 L16.5,10.3 L14.5,10.2 Z" fill="#7d7d7d"/><path d="M14.2,10.5 L16.5,10.5 L18.2,11 L19,12.5 L18.5,14.5 L17.5,16.5 L16.5,17.7 L15.8,15.5 L15.2,13.8 L14.2,13.2 Z" fill="#7d7d7d"/><path d="M23.4,15.8 L25,15.2 L26.2,15.8 L26.2,17.6 L24.2,17.8 L23.3,17 Z" fill="#7d7d7d"/><path d="M3,8.5 L4.1,7.9 L8.2,6 L10.5,5.6 L11,8.5 L9,9.5 L5.7,10.1 L3.8,9.8 Z" fill="#8ac4f8"/><path d="M5.7,10.1 L10,9.8 L9.5,11.8 L7,11.5 Z" fill="#2f68d8"/><path d="M3,8.5 L4.1,7.9 L4.3,9.5 Z" fill="#2f68d8"/><path d="M19,6.5 L22.7,7 L28.4,8.2 L28.7,9.2 L25.3,10 L19,10 Z" fill="#8ac4f8"/><path d="M22,10.3 L25,10.2 L24.5,12.2 L22.5,12.2 Z" fill="#2f68d8"/><path d="M10.4,14.5 L12.6,15.5 L11.3,17 L10,16 Z" fill="#2f68d8"/><path d="M23.4,15.8 L25.9,15.5 L26.2,17.7 L24,17.7 Z" fill="#2f68d8"/><circle cx="17.5" cy="14.5" r="0.8" fill="#8ab4f8"/></g></g></svg>
<svg class="a" style="left:1102px;top:69px" width="32" height="24" viewBox="0 0 32 24"><rect x="0.5" y="0.5" width="31" height="23" rx="4.5" fill="#fff" stroke="#dadce0"/><rect x="3.75" y="10.3" width="2.2" height="10.599999999999998" fill="#4285f4"/><rect x="9.4" y="5" width="2.2" height="15.899999999999999" fill="#4285f4"/><rect x="14.7" y="13.1" width="2.2" height="7.799999999999999" fill="#4285f4"/><rect x="20" y="6.6" width="2.2" height="14.299999999999999" fill="#4285f4"/><rect x="25.9" y="12.2" width="2.2" height="8.7" fill="#4285f4"/><path d="M3.1,10 L9.7,14.7 L16.25,9.7 L23.1,13.1 L29.4,6.6" fill="none" stroke="#f08a4b" stroke-width="1.1" stroke-linejoin="round" stroke-linecap="round"/></svg>
<svg class="a" style="left:907px;top:100px" width="32" height="24" viewBox="0 0 32 24"><rect x="0.5" y="0.5" width="31" height="23" rx="4.5" fill="#fff" stroke="#dadce0"/><rect x="3.6" y="10.1" width="2.6" height="3.8000000000000007" fill="#a142f4"/><rect x="3.6" y="13.9" width="2.6" height="6.799999999999999" fill="#4285f4"/><rect x="9.2" y="6" width="2.6" height="3.9000000000000004" fill="#a142f4"/><rect x="9.2" y="9.9" width="2.6" height="10.799999999999999" fill="#4285f4"/><rect x="14.2" y="10.1" width="2.6" height="4.9" fill="#a142f4"/><rect x="14.2" y="15" width="2.6" height="5.699999999999999" fill="#4285f4"/><rect x="20" y="4.1" width="2.6" height="6.800000000000001" fill="#a142f4"/><rect x="20" y="10.9" width="2.6" height="9.799999999999999" fill="#4285f4"/><rect x="25.6" y="9.6" width="2.6" height="5.200000000000001" fill="#a142f4"/><rect x="25.6" y="14.8" width="2.6" height="5.899999999999999" fill="#4285f4"/><path d="M3,11.7 L9.2,15.8 L15.8,11.4 L21.5,17.2 L28.9,5.5" fill="none" stroke="#f4845f" stroke-width="1.3" stroke-linejoin="round" stroke-linecap="round"/></svg>
<svg class="a" style="left:946px;top:100px" width="32" height="24" viewBox="0 0 32 24"><rect x="0.5" y="0.5" width="31" height="23" rx="4.5" fill="#fff" stroke="#dadce0"/><path d="M2.5,6.9 L10.6,19.4 L20,14.7 L24.7,19.7 L28.75,13.4" fill="none" stroke="#fa7b17" stroke-width="1.2" stroke-linejoin="round" stroke-linecap="round"/><path d="M2.8,19 L6.9,18.4 L10.6,13.4 L15,15.25 L19.7,9.4 L24,13.1 L28.75,5.6" fill="none" stroke="#4285f4" stroke-width="1.2" stroke-linejoin="round" stroke-linecap="round"/></svg>
<svg class="a" style="left:985px;top:100px" width="32" height="24" viewBox="0 0 32 24"><rect x="0.5" y="0.5" width="31" height="23" rx="4.5" fill="#fff" stroke="#dadce0"/><path d="M2.9,20 C5,20.5 7,19.8 8.25,19 C9.5,18 10,16.5 10.75,15.6 C12,13.5 12.5,11.25 13.6,11.25 C15,11.25 15.5,14 16.4,15 C17.3,16.2 17.8,16.6 18.6,16.6 C20,16.6 20.5,12.8 21.4,12.8 C22.5,12.8 23.5,15.3 25.1,15.3 C26.8,15.3 27.8,13 28.25,10.3" fill="none" stroke="#fa7b17" stroke-width="1.2"/><path d="M2.9,16.6 C4.5,15.5 5.5,12.2 7,12.2 C8.5,12.2 9,13 9.8,14 C11,16 12,18.4 13.25,18.4 C14.5,18.4 15,16.5 15.75,15.6 C17,13.5 18,8.4 19.5,8.4 C21,8.4 21.5,12 22.6,12.8 C23.5,13.8 24.3,14.4 25.1,14.4 C26,14.4 26.5,12.5 27,11.25 C27.6,9 28,6 28.25,4.1" fill="none" stroke="#4285f4" stroke-width="1.2"/></svg>
<svg class="a" style="left:1024px;top:100px" width="32" height="24" viewBox="0 0 32 24"><rect x="0.5" y="0.5" width="31" height="23" rx="4.5" fill="#fff" stroke="#dadce0"/><path d="M11.75,4.7 V19.7 M19.7,4.7 V19.7" stroke="#4285f4" stroke-width="1.3"/><rect x="9.6" y="7.5" width="4.3" height="9.4" fill="#fff" stroke="#4285f4" stroke-width="1.3"/><path d="M9.6,12.2 H13.9" stroke="#4285f4" stroke-width="1.2"/><rect x="17.5" y="9" width="4.4" height="4.8" fill="#fff" stroke="#4285f4" stroke-width="1.3"/><path d="M17.5,11.4 H21.9" stroke="#4285f4" stroke-width="1"/></svg>
<svg class="a" style="left:1063px;top:100px" width="32" height="24" viewBox="0 0 32 24"><rect x="0.5" y="0.5" width="31" height="23" rx="4.5" fill="#fff" stroke="#dadce0"/><path d="M11.7,4.7 V19.7 M19.5,4.7 V19.7" stroke="#4285f4" stroke-width="1.3"/><rect x="9" y="6.25" width="5.2" height="11.25" fill="#4285f4"/><rect x="17" y="8.4" width="5.3" height="6" fill="#4285f4"/></svg>
<svg class="a" style="left:1102px;top:100px" width="32" height="24" viewBox="0 0 32 24"><rect x="0.5" y="0.5" width="31" height="23" rx="4.5" fill="#fff" stroke="#dadce0"/><path d="M2.8,14.4 L11.9,9.1 L15.6,10.3 L28.1,5 V21 H2.8 Z" fill="#efdcfb"/><path d="M2.8,19.4 L6.9,19 L11.25,15.3 L15,17.2 L19.4,13.4 L23.1,15.6 L28.1,10.3 V21 H2.8 Z" fill="#dde8fc"/><path d="M2.8,14.4 L11.9,9.1 L15.6,10.3 L28.1,5" fill="none" stroke="#b266f2" stroke-width="1.2" stroke-linejoin="round" stroke-linecap="round"/><path d="M2.8,19.4 L6.9,19 L11.25,15.3 L15,17.2 L19.4,13.4 L23.1,15.6 L28.1,10.3" fill="none" stroke="#74a3f6" stroke-width="1.2" stroke-linejoin="round" stroke-linecap="round"/></svg>
<svg class="a" style="left:907px;top:132px" width="32" height="24" viewBox="0 0 32 24"><rect x="0.5" y="0.5" width="31" height="23" rx="4.5" fill="#fff" stroke="#dadce0"/><rect x="2.9" y="3.4" width="25.7" height="17.85" fill="#f1e2fb"/><rect x="2.9" y="2.8" width="25.7" height="1.3" fill="#c58af5"/><path d="M2.9,14.7 L11.4,10 L15.4,11.6 L28.25,6.25 V21.25 H2.9 Z" fill="#fde5d4"/><path d="M2.9,19.4 L6.6,19 L10.75,15.9 L14.5,17.2 L19.1,13.4 L23.25,15.6 L28.25,11.25 V21.25 H2.9 Z" fill="#dde8fc"/><path d="M2.9,14.7 L11.4,10 L15.4,11.6 L28.25,6.25" fill="none" stroke="#f08a4b" stroke-width="1.2" stroke-linejoin="round" stroke-linecap="round"/><path d="M2.9,19.4 L6.6,19 L10.75,15.9 L14.5,17.2 L19.1,13.4 L23.25,15.6 L28.25,11.25" fill="none" stroke="#74a3f6" stroke-width="1.2" stroke-linejoin="round" stroke-linecap="round"/></svg>
<svg class="a" style="left:946px;top:132px" width="32" height="24" viewBox="0 0 32 24"><rect x="0.5" y="0.5" width="31" height="23" rx="4.5" fill="#fff" stroke="#dadce0"/><path d="M2.8,19 L6.9,18.4 L10.6,14.4 L15,16.25 L19.4,10.9 L23.1,14 L27.5,8.1 V21.6 H2.8 Z" fill="#dfe6fb"/><path d="M2.8,16.6 L9.4,12.2 L17.2,20 L23.1,5 L27.8,15.3 V21.6 H2.8 Z" fill="#c4b4f3" opacity="0.85"/><path d="M2.8,19 L6.9,18.4 L10.6,14.4 L15,16.25 L19.4,10.9 L23.1,14 L27.5,8.1" fill="none" stroke="#74a3f6" stroke-width="1.2" stroke-linejoin="round" stroke-linecap="round"/><path d="M2.8,16.6 L9.4,12.2 L17.2,20 L23.1,5 L27.8,15.3" fill="none" stroke="#b266f2" stroke-width="1.2" stroke-linejoin="round" stroke-linecap="round"/></svg>
<svg class="a" style="left:985px;top:132px" width="32" height="24" viewBox="0 0 32 24"><rect x="0.5" y="0.5" width="31" height="23" rx="4.5" fill="#fff" stroke="#dadce0"/><circle cx="3.9" cy="19.4" r="1.1" fill="#4285f4"/><circle cx="5.75" cy="16.25" r="1.1" fill="#4285f4"/><circle cx="8.6" cy="14" r="1.1" fill="#4285f4"/><circle cx="12" cy="16.6" r="1.1" fill="#4285f4"/><circle cx="18.9" cy="5" r="1.1" fill="#4285f4"/><circle cx="27" cy="7.2" r="1.1" fill="#4285f4"/><circle cx="23.25" cy="19.7" r="1.1" fill="#4285f4"/></svg>
<svg class="a" style="left:1024px;top:132px" width="32" height="24" viewBox="0 0 32 24"><rect x="0.5" y="0.5" width="31" height="23" rx="4.5" fill="#fff" stroke="#dadce0"/><circle cx="7.2" cy="10.3" r="2.5" fill="#4285f4" opacity=".9"/><circle cx="6.25" cy="16.9" r="1.6" fill="#4285f4" opacity=".9"/><circle cx="4.4" cy="19.1" r="0.8" fill="#4285f4" opacity=".7"/><circle cx="12.2" cy="13.4" r="1.2" fill="#4285f4" opacity=".9"/><circle cx="20.3" cy="12.8" r="4" fill="#4285f4" opacity=".9"/><circle cx="25" cy="5.9" r="1.9" fill="#4285f4" opacity=".9"/><circle cx="26" cy="19.7" r="1.7" fill="#4285f4" opacity=".9"/></svg>
<svg class="a" style="left:1061px;top:130px" width="36" height="28" viewBox="0 0 36 28"><rect x="1.4" y="1.2" width="33.1" height="25.3" rx="5.5" fill="#fff" stroke="#3c82f6" stroke-width="2.2"/></svg>
<svg class="a" style="left:1063px;top:132px" width="32" height="24" viewBox="0 0 32 24"><rect x="3.3" y="4" width="23.7" height="3.8" fill="#dfe0e2"/><rect x="4" y="4.7" width="5.9" height="2.2" fill="#3c3c3c"/><rect x="11.75" y="4.7" width="7.5" height="2.2" fill="#3c3c3c"/><rect x="24" y="4.7" width="3" height="2.2" fill="#3c3c3c"/><rect x="3.3" y="12" width="23.7" height="0.6" fill="#eeeeee"/><rect x="3.3" y="17" width="23.7" height="0.6" fill="#eeeeee"/><rect x="4" y="9.7" width="5.9" height="1.5" fill="#9e9e9e"/><rect x="4" y="14.4" width="4" height="1.6" fill="#9e9e9e"/><rect x="4" y="19" width="5.9" height="2" fill="#9e9e9e"/><rect x="11.9" y="9.7" width="6" height="1.5" fill="#9e9e9e"/><rect x="11.9" y="19" width="7.85" height="2" fill="#9e9e9e"/><rect x="24" y="14.4" width="3.4" height="1.6" fill="#9e9e9e"/><rect x="25.6" y="10" width="1" height="1" fill="#fa7b17"/><rect x="17.5" y="15" width="1" height="1" fill="#8e24aa"/><rect x="25.6" y="19.9" width="1" height="1" fill="#fa7b17"/></svg>
<svg class="a" style="left:1102px;top:132px" width="32" height="24" viewBox="0 0 32 24"><rect x="0.5" y="0.5" width="31" height="23" rx="4.5" fill="#fff" stroke="#dadce0"/><rect x="3.3" y="4" width="23.7" height="3.8" fill="#dfe0e2"/><rect x="4" y="4.7" width="5.9" height="2.2" fill="#3c3c3c"/><rect x="11.75" y="4.7" width="7.5" height="2.2" fill="#3c3c3c"/><rect x="24" y="4.7" width="3" height="2.2" fill="#3c3c3c"/><rect x="3.3" y="12" width="23.7" height="0.6" fill="#eeeeee"/><rect x="3.3" y="17" width="23.7" height="0.6" fill="#eeeeee"/><rect x="4" y="9.7" width="5.9" height="1.5" fill="#9e9e9e"/><rect x="4" y="14.4" width="4" height="1.6" fill="#9e9e9e"/><rect x="4" y="19" width="5.9" height="2" fill="#9e9e9e"/><rect x="13.1" y="9.5" width="6.6" height="1.9" rx="0.9" fill="#4285f4"/><rect x="10.9" y="18.9" width="8.8" height="2.1" rx="0.5" fill="#4285f4"/><ellipse cx="25.7" cy="15.2" rx="1.8" ry="1" fill="#4285f4"/><rect x="25.6" y="10" width="1" height="1" fill="#fa7b17"/><rect x="17.5" y="15" width="1" height="1" fill="#8e24aa"/><rect x="25.6" y="19.9" width="1" height="1" fill="#fa7b17"/></svg>
<svg class="a" style="left:907px;top:163px" width="32" height="24" viewBox="0 0 32 24"><rect x="0.5" y="0.5" width="31" height="23" rx="4.5" fill="#fff" stroke="#dadce0"/><rect x="2.6" y="3.4" width="25.6" height="3.9" fill="#dfe0e2"/><rect x="3.6" y="4.6" width="5.7" height="1.6" fill="#3c3c3c"/><rect x="11.4" y="4.6" width="5.8" height="1.6" fill="#3c3c3c"/><rect x="24.6" y="4.6" width="3" height="1.6" fill="#3c3c3c"/><rect x="11.5" y="7.7" width="8" height="4.2" fill="#a8c7fa"/><rect x="19.5" y="12.3" width="8.8" height="4.6" fill="#d2e3fc"/><rect x="11.5" y="17.4" width="8" height="4.5" fill="#3b78e7"/><rect x="3.6" y="9.1" width="5.8" height="1.4" fill="#9e9e9e"/><rect x="12.2" y="9.1" width="3.8" height="1.4" fill="#7a8aa8"/><rect x="3.6" y="14" width="3.8" height="1.3" fill="#9e9e9e"/><rect x="24.6" y="13.9" width="2.6" height="1.3" fill="#8a95a8"/><rect x="3.6" y="18.8" width="5.8" height="1.4" fill="#9e9e9e"/><rect x="12" y="18.8" width="2.5" height="1.3" fill="#2a4a90"/></svg>
<svg class="a" style="left:946px;top:163px" width="32" height="24" viewBox="0 0 32 24"><rect x="0.5" y="0.5" width="31" height="23" rx="4.5" fill="#fff" stroke="#dadce0"/><rect x="2.8" y="7.2" width="25.6" height="1.9" fill="#e1e1e1"/><rect x="2.8" y="7.2" width="6" height="1.9" fill="#a0a4ab"/><rect x="16" y="7.2" width="5" height="1.9" fill="#b5b8bd"/><rect x="2.8" y="9.1" width="25.6" height="3" fill="#3b82f6"/><rect x="2.8" y="12.1" width="25.6" height="1.8" fill="#e8e8e8"/><rect x="2.8" y="12.1" width="6" height="1.8" fill="#a0a4ab"/><rect x="2.8" y="13.9" width="25.6" height="0.8" fill="#555"/><rect x="15.7" y="6.6" width="0.8" height="8.2" fill="#333"/></svg>
<svg class="a" style="left:985px;top:163px" width="32" height="24" viewBox="0 0 32 24"><rect x="0.5" y="0.5" width="31" height="23" rx="4.5" fill="#fff" stroke="#dadce0"/><rect x="3.3" y="3.6" width="10.1" height="7.4" fill="#1a5ed6"/><rect x="3.3" y="11.9" width="10.1" height="7.9" fill="#5d9cf7"/><rect x="3.3" y="11" width="10.1" height="0.9" fill="#a8c7fa"/><rect x="14.4" y="3.6" width="12.9" height="3" fill="#fa7b17"/><rect x="14.4" y="7.5" width="7" height="12.3" fill="#a142f4"/><rect x="22.3" y="7.5" width="5" height="8" fill="#8c32e0"/><rect x="22.3" y="15.8" width="5" height="1.2" fill="#d2aaf8"/><rect x="22.3" y="17.2" width="5" height="2.6" fill="#c58af5"/></svg>
<svg class="a" style="left:1024px;top:163px" width="32" height="24" viewBox="0 0 32 24"><rect x="0.5" y="0.5" width="31" height="23" rx="4.5" fill="#fff" stroke="#dadce0"/><rect x="6.4" y="3.4" width="20.4" height="17.3" fill="#dcdde0"/><path d="M6.5,10 C14,10.5 18,20.5 26.5,20 V16.8 C18,16.8 14,6.8 6.5,7.5 Z" fill="#fff" opacity=".5"/><path d="M6.5,9.3 C14,9.7 17,19 26.6,19.3" fill="none" stroke="#3b82f6" stroke-width="2.6"/><rect x="2.8" y="3.4" width="3.6" height="8.7" fill="#a142f4"/><rect x="2.8" y="12.1" width="3.6" height="8.9" fill="#fa7b17"/><rect x="26.6" y="3.4" width="3.6" height="12.3" fill="#fa7b17"/><rect x="26.6" y="15.7" width="3.6" height="5.3" fill="#a142f4"/></svg>
<svg class="a" style="left:1063px;top:163px" width="32" height="24" viewBox="0 0 32 24"><rect x="0.5" y="0.5" width="31" height="23" rx="4.5" fill="#fff" stroke="#dadce0"/><path d="M3.65,19.90 A11.75,11.75 0 0 1 15.40,8.15" fill="none" stroke="#1a73e8" stroke-width="5.3"/><path d="M15.40,8.15 A11.75,11.75 0 0 1 27.15,19.90" fill="none" stroke="#9e9e9e" stroke-width="5.3"/><text x="15.6" y="18.6" font-size="4.8" font-family="Liberation Sans" text-anchor="middle" fill="#444">111K</text><rect x="14" y="12.2" width="3" height="1" fill="#555"/></svg>
<svg class="a" style="left:1102px;top:163px" width="32" height="24" viewBox="0 0 32 24"><rect x="0.5" y="0.5" width="31" height="23" rx="4.5" fill="#fff" stroke="#dadce0"/><path d="M2.10,17.70 A14,14 0 0 1 30.10,17.70" fill="none" stroke="#b0b0b0" stroke-width="0.9"/><path d="M6.50,17.70 A9.6,9.6 0 0 1 25.70,17.70" fill="none" stroke="#c8c8c8" stroke-width="0.7"/><path d="M4.40,17.70 A11.7,11.7 0 0 1 27.80,17.70" fill="none" stroke="#1a73e8" stroke-width="3.8"/><rect x="15.5" y="3.2" width="1.5" height="5.3" fill="#222"/><text x="16.1" y="17.3" font-size="4.6" font-family="Liberation Sans" text-anchor="middle" fill="#444">222.7K</text><rect x="14.6" y="11.2" width="3" height="1" fill="#555"/><rect x="1.8" y="19" width="1" height="1" fill="#8e24aa"/><rect x="26.8" y="19" width="2" height="1" fill="#8e24aa"/></svg>
<svg class="a" style="left:907px;top:195px" width="32" height="24" viewBox="0 0 32 24"><rect x="0.5" y="0.5" width="31" height="23" rx="4.5" fill="#fff" stroke="#dadce0"/><rect x="5.1" y="12.9" width="3.7" height="8.6" fill="#4285f4"/><rect x="9.8" y="9.7" width="3.7" height="6.3" fill="#fa7b17"/><rect x="13.5" y="4" width="3.5" height="5.2" fill="#4285f4"/><rect x="18" y="2.6" width="4" height="4.2" fill="#fa7b17"/><rect x="23" y="2.9" width="3.5" height="18.6" fill="#4285f4"/></svg>
<svg class="a" style="left:946px;top:195px" width="32" height="24" viewBox="0 0 32 24"><rect x="0.5" y="0.5" width="31" height="23" rx="4.5" fill="#fff" stroke="#dadce0"/><rect x="10.4" y="4.4" width="8.9" height="3.8" fill="#4285f4"/><rect x="19.3" y="4.4" width="4.4" height="3.8" fill="#fa7b17"/><rect x="5" y="10.1" width="7.2" height="3.6" fill="#4285f4"/><rect x="12.2" y="10.1" width="7.5" height="3.6" fill="#fa7b17"/><rect x="13.1" y="15.5" width="4.1" height="3.5" fill="#4285f4"/><rect x="17.2" y="15.5" width="9.6" height="3.5" fill="#fa7b17"/></svg>
<div class="a" style="left:902px;top:225px;width:239px;height:1px;background:#c8c8c8"></div>
<div class="t" style="left:941.5px;top:235.84px;font-size:12px;color:#3f68d9">SETUP</div>
<div class="t" style="left:1062px;top:235.84px;font-size:12px;color:#6f6f6f">STYLE</div>
<div class="a" style="left:902px;top:260px;width:119px;height:2px;background:#3f68d9"></div>
<div class="a" style="left:902px;top:262px;width:239px;height:1px;background:#c6c6c6"></div>
<div class="a" style="left:902px;top:263px;width:231px;height:1px;background:#e0e0e0"></div>
<div class="a" style="left:1133px;top:263px;width:8px;height:497px;background:#ededed"></div>
<div class="a" style="left:1133px;top:502px;width:8px;height:245px;background:#a9a9a9;border-radius:4px"></div>
<div class="a" style="left:1141px;top:0;width:1px;height:760px;background:#bdc1c6"></div>
<div class="t" style="left:907px;top:279.19px;font-size:11px;color:#6d6d6d;font-weight:bold">Totals</div>
<div class="t" style="left:907px;top:307.71px;font-size:9.5px;color:#757575">Rows</div>
<div class="a" style="left:917px;top:333px;width:18px;height:18px;border:2px solid #636363;border-radius:2px"></div>
<div class="t" style="left:946.5px;top:334.84px;font-size:12px;color:#212121">Show grand total</div>
<div class="t" style="left:907px;top:372.71px;font-size:9.5px;color:#757575">Columns</div>
<div class="a" style="left:917px;top:398px;width:18px;height:18px;border:2px solid #636363;border-radius:2px"></div>
<div class="t" style="left:946.5px;top:399.84px;font-size:12px;color:#212121">Show grand total</div>
<div class="a" style="left:902px;top:444px;width:231px;height:1px;background:#d0d0d0"></div>
<div class="t" style="left:907px;top:460.19px;font-size:11px;color:#6d6d6d;font-weight:bold">Sorting</div>
<div class="t" style="left:907px;top:488.71px;font-size:9.5px;color:#757575">Row #1</div>
<div class="t" style="left:907px;top:514.53px;font-size:10px;color:#757575">EU_Sales</div>
<svg class="a" style="left:1114px;top:518px" width="8" height="5"><path d="M1,0.5 H7 L4,4 Z" fill="#5f6368"/></svg>
<div class="a" style="left:907px;top:533px;width:220px;height:1px;background:#dadada"></div>
<div class="a" style="left:913px;top:540px;width:20px;height:20px;border:2px solid #1a73e8;border-radius:50%"></div><div class="a" style="left:918px;top:545px;width:10px;height:10px;background:#1a73e8;border-radius:50%"></div>
<div class="t" style="left:943.5px;top:543.34px;font-size:12px;color:#212121">Descending</div>
<div class="a" style="left:913px;top:572px;width:20px;height:20px;border:2px solid #5f6368;border-radius:50%"></div>
<div class="t" style="left:943.5px;top:575.34px;font-size:12px;color:#212121">Ascending</div>
<div class="t" style="left:907.5px;top:606.19px;font-size:11px;color:#757575">Number of rows</div>
<div class="a" style="left:916px;top:639px;width:13px;height:2px;background:#5f6368"></div>
<div class="a" style="left:937px;top:624px;width:50px;height:30px;border:1px solid #a0a0a0;border-radius:4px"></div>
<div class="t" style="left:951px;top:632.69px;font-size:11px;color:#757575">Auto</div>
<div class="a" style="left:996px;top:639px;width:13px;height:2px;background:#5f6368"></div><div class="a" style="left:1001.5px;top:634px;width:2px;height:12px;background:#5f6368"></div>
<div class="t" style="left:907px;top:673.71px;font-size:9.5px;color:#757575">Column #1</div>
<div class="t" style="left:907px;top:700.03px;font-size:10px;color:#757575">EU_Sales</div>
<svg class="a" style="left:1114px;top:704px" width="8" height="5"><path d="M1,0.5 H7 L4,4 Z" fill="#5f6368"/></svg>
<div class="a" style="left:907px;top:718px;width:220px;height:1px;background:#dadada"></div>
<div class="a" style="left:913px;top:725px;width:20px;height:20px;border:2px solid #1a73e8;border-radius:50%"></div><div class="a" style="left:918px;top:730px;width:10px;height:10px;background:#1a73e8;border-radius:50%"></div>
<div class="t" style="left:943.5px;top:728.34px;font-size:12px;color:#212121">Descending</div>
<div class="a" style="left:913px;top:757px;width:20px;height:20px;border:2px solid #5f6368;border-radius:50%"></div>
<div class="a" style="left:1146px;top:-10px;width:150px;height:26px;background:#f1f3f4;border-radius:8px"></div>
<svg class="a" style="left:1150px;top:-8px" width="20" height="16"><circle cx="8" cy="6.7" r="4.3" fill="none" stroke="#5f6368" stroke-width="1.7"/><path d="M11.4,10 L15.4,14.2" stroke="#5f6368" stroke-width="1.8" stroke-linecap="round"/></svg>
<div class="t" style="left:1174.5px;top:-6.16px;font-size:12px;color:#6b6f74">Search</div>
<svg class="a" style="left:1154px;top:36px" width="13" height="15"><path d="M6.5,0.5 L12.5,6.5 H9 V11 H4 V6.5 H0.5 Z" fill="#5f6368"/><rect x="0" y="13" width="12.5" height="2" fill="#5f6368"/></svg>
<div class="t" style="left:1178px;top:35.99px;font-size:11px;color:#202124">vgsales.csv</div>
<div class="a" style="left:1146px;top:61px;width:134px;height:1px;background:#bdc1c6"></div>
<svg class="a" style="left:1154px;top:70.5px" width="15" height="8"><path d="M0.7,1.5 L2.3,0.8 V7 M5,0.8 H8.6 V3.8 H5.4 V6.3 H9 M10.2,0.8 H13.6 V6.3 H10.2 M11.3,3.6 H13.6" fill="none" stroke="#81c995" stroke-width="1.5"/></svg>
<div class="t" style="left:1180.5px;top:67.19px;font-size:11px;color:#202124;letter-spacing:-0.25px">EU_Sales</div>
<svg class="a" style="left:1154px;top:92.5px" width="15" height="8"><path d="M0.8,7 V1.6 L1.6,0.8 H3.7 V7 M0.8,4 H3.7 M5.3,7 V0.8 H8.2 L8.8,1.4 V3.6 H5.3 M8.2,3.6 L8.8,4.2 V6.3 H5.3 M13.7,0.8 H10.9 V6.3 H13.7" fill="none" stroke="#81c995" stroke-width="1.5"/></svg>
<div class="t" style="left:1180.5px;top:89.19px;font-size:11px;color:#202124;letter-spacing:-0.25px">Genre</div>
<svg class="a" style="left:1154px;top:114.5px" width="15" height="8"><path d="M0.7,1.5 L2.3,0.8 V7 M5,0.8 H8.6 V3.8 H5.4 V6.3 H9 M10.2,0.8 H13.6 V6.3 H10.2 M11.3,3.6 H13.6" fill="none" stroke="#81c995" stroke-width="1.5"/></svg>
<div class="t" style="left:1180.5px;top:111.19px;font-size:11px;color:#202124;letter-spacing:-0.25px">Global_Sales</div>
<svg class="a" style="left:1154px;top:136.5px" width="15" height="8"><path d="M0.7,1.5 L2.3,0.8 V7 M5,0.8 H8.6 V3.8 H5.4 V6.3 H9 M10.2,0.8 H13.6 V6.3 H10.2 M11.3,3.6 H13.6" fill="none" stroke="#81c995" stroke-width="1.5"/></svg>
<div class="t" style="left:1180.5px;top:133.19px;font-size:11px;color:#202124;letter-spacing:-0.25px">JP_Sales</div>
<svg class="a" style="left:1154px;top:158.5px" width="15" height="8"><path d="M0.7,1.5 L2.3,0.8 V7 M5,0.8 H8.6 V3.8 H5.4 V6.3 H9 M10.2,0.8 H13.6 V6.3 H10.2 M11.3,3.6 H13.6" fill="none" stroke="#81c995" stroke-width="1.5"/></svg>
<div class="t" style="left:1180.5px;top:155.19px;font-size:11px;color:#202124;letter-spacing:-0.25px">NA_Sales</div>
<svg class="a" style="left:1154px;top:180.5px" width="15" height="8"><path d="M0.8,7 V1.6 L1.6,0.8 H3.7 V7 M0.8,4 H3.7 M5.3,7 V0.8 H8.2 L8.8,1.4 V3.6 H5.3 M8.2,3.6 L8.8,4.2 V6.3 H5.3 M13.7,0.8 H10.9 V6.3 H13.7" fill="none" stroke="#81c995" stroke-width="1.5"/></svg>
<div class="t" style="left:1180.5px;top:177.19px;font-size:11px;color:#202124;letter-spacing:-0.25px">Name</div>
<svg class="a" style="left:1154px;top:202.5px" width="15" height="8"><path d="M0.7,1.5 L2.3,0.8 V7 M5,0.8 H8.6 V3.8 H5.4 V6.3 H9 M10.2,0.8 H13.6 V6.3 H10.2 M11.3,3.6 H13.6" fill="none" stroke="#81c995" stroke-width="1.5"/></svg>
<div class="t" style="left:1180.5px;top:199.19px;font-size:11px;color:#202124;letter-spacing:-0.25px">Other_Sales</div>
<svg class="a" style="left:1154px;top:224.5px" width="15" height="8"><path d="M0.8,7 V1.6 L1.6,0.8 H3.7 V7 M0.8,4 H3.7 M5.3,7 V0.8 H8.2 L8.8,1.4 V3.6 H5.3 M8.2,3.6 L8.8,4.2 V6.3 H5.3 M13.7,0.8 H10.9 V6.3 H13.7" fill="none" stroke="#81c995" stroke-width="1.5"/></svg>
<div class="t" style="left:1180.5px;top:221.19px;font-size:11px;color:#202124;letter-spacing:-0.25px">Platform</div>
<svg class="a" style="left:1154px;top:246.5px" width="15" height="8"><path d="M0.8,7 V1.6 L1.6,0.8 H3.7 V7 M0.8,4 H3.7 M5.3,7 V0.8 H8.2 L8.8,1.4 V3.6 H5.3 M8.2,3.6 L8.8,4.2 V6.3 H5.3 M13.7,0.8 H10.9 V6.3 H13.7" fill="none" stroke="#81c995" stroke-width="1.5"/></svg>
<div class="t" style="left:1180.5px;top:243.19px;font-size:11px;color:#202124;letter-spacing:-0.25px">Publisher</div>
<svg class="a" style="left:1154px;top:268.5px" width="15" height="8"><path d="M0.8,7 V1.6 L1.6,0.8 H3.7 V7 M0.8,4 H3.7 M5.3,7 V0.8 H8.2 L8.8,1.4 V3.6 H5.3 M8.2,3.6 L8.8,4.2 V6.3 H5.3 M13.7,0.8 H10.9 V6.3 H13.7" fill="none" stroke="#81c995" stroke-width="1.5"/></svg>
<div class="t" style="left:1180.5px;top:265.19px;font-size:11px;color:#202124;letter-spacing:-0.25px">Rank</div>
<svg class="a" style="left:1154px;top:287px" width="14" height="15"><path d="M3.5,0 V3 M9.5,0 V3" stroke="#81c995" stroke-width="1.3"/><rect x="1.5" y="2.3" width="11" height="11.2" rx="1" fill="none" stroke="#81c995" stroke-width="1.6"/><rect x="1.5" y="2.3" width="11" height="3" fill="#81c995"/><rect x="7" y="8" width="3.5" height="3.5" fill="#81c995"/></svg>
<div class="t" style="left:1180.5px;top:287.19px;font-size:11px;color:#202124;letter-spacing:-0.25px">Year</div>
<svg class="a" style="left:1154px;top:312.5px" width="15" height="8"><path d="M0.7,1.5 L2.3,0.8 V7 M5,0.8 H8.6 V3.8 H5.4 V6.3 H9 M10.2,0.8 H13.6 V6.3 H10.2 M11.3,3.6 H13.6" fill="none" stroke="#7baaf7" stroke-width="1.5"/></svg>
<div class="t" style="left:1180.5px;top:309.19px;font-size:11px;color:#202124;letter-spacing:-0.25px">Record Count</div>
</body></html>
